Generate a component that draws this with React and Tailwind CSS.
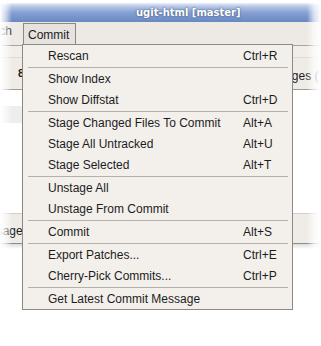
const menuItems = [
  ['Rescan', 'Ctrl+R'],
  'sep',
  ['Show Index', ''],
  ['Show Diffstat', 'Ctrl+D'],
  'sep',
  ['Stage Changed Files To Commit', 'Alt+A'],
  ['Stage All Untracked', 'Alt+U'],
  ['Stage Selected', 'Alt+T'],
  'sep',
  ['Unstage All', ''],
  ['Unstage From Commit', ''],
  'sep',
  ['Commit', 'Alt+S'],
  'sep',
  ['Export Patches...', 'Ctrl+E'],
  ['Cherry-Pick Commits...', 'Ctrl+P'],
  'sep',
  ['Get Latest Commit Message', ''],
];

const CommitMenu = () => (
  <div className="absolute left-[22px] top-[44px] z-20 w-[271px] border border-[#8c8884] bg-[#f3f0ec]">
    {menuItems.map((item, i) =>
      item === 'sep' ? (
        <div key={i} className="h-[2px] pt-px">
          <div className="ml-[5px] mr-[4px] h-px bg-[#b4b0ac]" />
        </div>
      ) : (
        <div key={i} className="flex h-[21px] items-center pl-[25px] text-[12px] text-[#1c1c1c]">
          <span className="w-[195px] whitespace-nowrap">{item[0]}</span>
          <span className="whitespace-nowrap">{item[1]}</span>
        </div>
      )
    )}
  </div>
);

export default function App() {
  return (
    <div className="relative h-[346px] w-[321px] overflow-hidden bg-white font-['Liberation_Sans',Arial,sans-serif]">
      {/* window behind the menu */}
      <div className="pt-[3px]">
        {/* title bar */}
        <div className="flex h-[19px] items-center bg-gradient-to-b from-[#d3ddef] via-[#86a1d2] to-[#6888c3] pl-[136px]">
          <span className="font-['DejaVu_Sans',sans-serif] text-[10px] font-bold text-white [text-shadow:0_0_2px_#2b3f66]">
            ugit-html [master]
          </span>
        </div>

        {/* menubar */}
        <div className="flex h-[24px] items-end border-b border-[#a7a39f] bg-[#edeae6] text-[12px] text-[#1c1c1c]">
          <span className="ml-[-26px] mb-[5px] whitespace-nowrap">Branch</span>
          <div className="ml-[11px] flex h-[22px] w-[53px] items-start border border-b-0 border-[#8c8884] bg-[#e6e2de] pl-[4px] pt-[2px]">
            Commit
          </div>
        </div>

        {/* toolbar / status area */}
        <div className="h-[11px] bg-[#f1eeea]" />
        <div className="flex h-[33px] items-center border-t border-b border-t-[#dedad6] border-b-[#9e9a96] bg-[#efece8] text-[12px] text-[#1c1c1c]">
          <span className="ml-[18px] text-[11px] font-bold leading-none">8</span>
          <span className="ml-[239px] mt-[4px] whitespace-nowrap">Changes (</span>
        </div>

        <div className="h-[16px]" />
        <div className="h-[17px] w-[34px] bg-gradient-to-r from-[#ececec] to-[#efefef]" />
        <div className="h-[90px]" />

        {/* commit message panel */}
        <div className="flex h-[31px] items-center border-t border-b border-t-[#d2cfcb] border-b-[#8f8b87] bg-[#efece8] text-[12px] text-[#1c1c1c]">
          <span className="ml-[-26px] mt-[5px] whitespace-nowrap">Message</span>
          <div className="ml-[232px] mb-[4px] h-px w-[30px] border-t border-dotted border-[#b5b1ad]" />
        </div>
        <div className="h-[5px] bg-gradient-to-b from-[#dcdcdc] to-white" />
      </div>

      {/* soft faded edges of the screenshot */}
      <div className="pointer-events-none absolute inset-y-0 left-0 z-10 w-[12px] bg-gradient-to-r from-white via-white/60 to-transparent" />
      <div className="pointer-events-none absolute inset-y-0 right-0 z-10 w-[14px] bg-gradient-to-l from-white via-white/70 to-transparent" />
      <div className="pointer-events-none absolute inset-x-0 top-0 z-10 h-[6px] bg-gradient-to-b from-white to-transparent" />

      <CommitMenu />
    </div>
  );
}
